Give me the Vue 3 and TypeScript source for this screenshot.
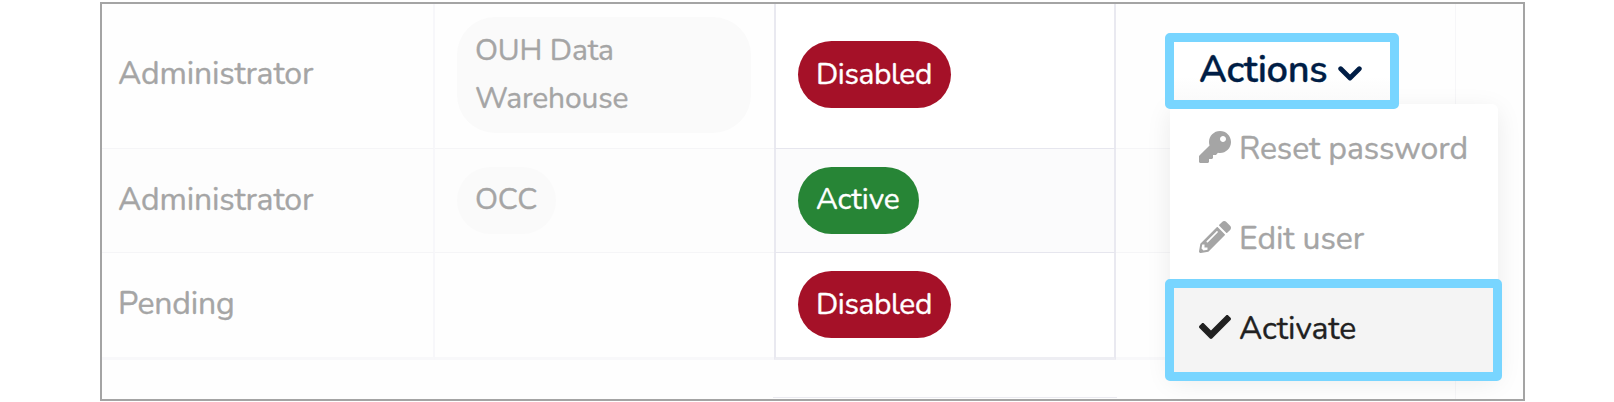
<script setup lang="ts">
interface UserRow {
  role: string
  organisation: string
  status: 'Disabled' | 'Active'
}

interface MenuItem {
  label: string
  icon: string
}

const rows: UserRow[] = [
  { role: 'Administrator', organisation: 'OUH Data Warehouse', status: 'Disabled' },
  { role: 'Administrator', organisation: 'OCC', status: 'Active' },
  { role: 'Pending', organisation: '', status: 'Disabled' },
]

const menu: MenuItem[] = [
  {
    label: 'Reset password',
    icon: 'M512 176.001C512 273.203 433.202 352 336 352c-11.22 0-22.19-1.062-32.827-3.069l-24.012 27.014A23.999 23.999 0 0 1 261.223 384H224v40c0 13.255-10.745 24-24 24h-40v40c0 13.255-10.745 24-24 24H24c-13.255 0-24-10.745-24-24v-78.059c0-6.365 2.529-12.47 7.029-16.971l161.802-161.802C163.108 213.814 160 195.271 160 176 160 78.798 238.797.001 335.999 0 433.488-.001 512 78.511 512 176.001zM336 128c0 26.51 21.49 48 48 48s48-21.49 48-48-21.49-48-48-48-48 21.49-48 48z',
  },
  {
    label: 'Edit user',
    icon: 'M497.9 142.1l-46.1 46.1c-4.7 4.7-12.3 4.7-17 0l-111-111c-4.7-4.7-4.7-12.3 0-17l46.1-46.1c18.7-18.7 49.1-18.7 67.9 0l60.1 60.1c18.8 18.7 18.8 49.1 0 67.9zM284.2 99.8L21.6 362.4.4 483.9c-2.9 16.4 11.4 30.6 27.8 27.8l121.5-21.3 262.6-262.6c4.7-4.7 4.7-12.3 0-17l-111-111c-4.8-4.7-12.4-4.7-17.1 0zM124.1 339.9c-5.5-5.5-5.5-14.3 0-19.8l154-154c5.5-5.5 14.3-5.5 19.8 0s5.5 14.3 0 19.8l-154 154c-5.5 5.5-14.3 5.5-19.8 0zM88 424h48v36.3l-64.5 11.3-31.1-31.1L51.7 376H88v48z',
  },
]

const checkIcon =
  'M173.898 439.404l-166.4-166.4c-9.997-9.997-9.997-26.206 0-36.204l36.203-36.204c9.997-9.998 26.207-9.998 36.204 0L192 312.69 432.095 72.596c9.997-9.997 26.207-9.997 36.204 0l36.203 36.204c9.997 9.997 9.997 26.206 0 36.204l-294.4 294.401c-9.998 9.997-26.207 9.997-36.204-.001z'
</script>

<template>
  <main class="page">
    <section class="frame">
      <div class="table">
        <div v-for="(row, i) in rows" :key="i" class="row" :class="{ striped: i === 1 }">
          <div class="cell role">{{ row.role }}</div>
          <div class="cell">
            <span v-if="row.organisation" class="pill tag">{{ row.organisation }}</span>
          </div>
          <div class="cell status">
            <span class="pill" :class="row.status.toLowerCase()">{{ row.status }}</span>
          </div>
          <div class="cell last"></div>
        </div>
        <div class="rest"><span></span></div>
      </div>
    </section>

    <div class="menu">
      <div v-for="item in menu" :key="item.label" class="item">
        <svg class="icon" viewBox="0 0 512 512"><path :d="item.icon" /></svg>
        <span class="label">{{ item.label }}</span>
      </div>
    </div>

    <button class="actions" type="button">
      <span>Actions</span>
      <svg class="chevron" viewBox="0 0 24 15"><path d="M2.7 2.7 12 12 21.3 2.7" /></svg>
    </button>

    <div class="item activate">
      <svg class="icon" viewBox="0 0 512 512"><path :d="checkIcon" /></svg>
      <span class="label">Activate</span>
    </div>
  </main>
</template>

<style>
body { margin: 0; background: #fff; }
</style>

<style scoped>
.page {
  position: relative;
  box-sizing: border-box;
  width: 1614px;
  height: 402px;
  padding: 2px 0 0 100px;
  overflow: hidden;
  font-family: Nunito, Lato, sans-serif;
  font-size: 32px;
  letter-spacing: -0.15px;
  color: #a5a5a5;
  -webkit-text-stroke: 0.35px currentColor;
}
.frame {
  box-sizing: border-box;
  width: 1425px;
  height: 399px;
  border: 2px solid #a4a4a4;
  background: #fefefe;
}
.table {
  display: grid;
  grid-template-rows: 145px 104px 107px 38px;
  box-sizing: border-box;
  width: 1354px;
  height: 395px;
  border-right: 1px solid #f6f6f8;
}
.row {
  display: grid;
  grid-template-columns: 333px 339px 342px 1fr;
}
.cell {
  display: flex;
  align-items: center;
  box-sizing: border-box;
  min-width: 0;
  padding: 0 22px 1px;
  border-right: 2px solid #f7f7fa;
  border-bottom: 1px solid #f5f5f7;
}
.row:first-child .cell { padding-bottom: 3px; }
.cell:nth-child(2) { border-right: 0; }
.row .cell.role { padding-left: 16px; padding-bottom: 3px; }
.row:first-child .cell.role { padding-bottom: 6px; }
.cell.last { border-right: 0; }
.cell.status {
  border-left: 2px solid #e9e9f0;
  border-right: 2px solid #e9e9f0;
  border-bottom-color: #e6e6ee;
  background: #fff;
}
.striped { background: #fdfdfd; }
.striped .status { background: #fbfbfc; }
.row:nth-child(3) .cell { border-bottom: 3px solid #f8f8fa; }
.row:nth-child(3) .status { border-bottom-color: #eeeef3; }
.rest { padding-left: 671px; display: flex; align-items: flex-end; }
.rest span { width: 344px; height: 1px; background: #eaeaf0; }

.pill {
  box-sizing: border-box;
  padding: 9px 18px 10px;
  border-radius: 34px;
  font-size: 30px;
  line-height: 48px;
  white-space: nowrap;
}
.tag {
  background: #fafafa;
  white-space: normal;
}
.row:first-child .tag { width: 294px; border-radius: 38px; }
.row:first-child .pill.tag { padding: 10px 18px 9px; line-height: 48.5px; }
.row:nth-child(2) .tag { width: 99px; white-space: nowrap; }
.disabled { padding: 10px 18px 9px; background: #a51128; color: #fff; width: 153px; letter-spacing: -0.4px; }
.active { background: #278536; color: #fff; width: 121px; }

.menu {
  position: absolute;
  left: 1170px;
  top: 104px;
  box-sizing: border-box;
  width: 328px;
  height: 272px;
  border-radius: 6px;
  background: #fff;
  box-shadow: 0 6px 26px rgba(0, 0, 0, 0.08);
}
.item {
  display: flex;
  align-items: center;
  gap: 8px;
  box-sizing: border-box;
  height: 90px;
  padding: 0 0 4px 29px;
  white-space: nowrap;
}
.label { padding-top: 2px; letter-spacing: -0.1px; }
.icon {
  width: 32px;
  height: 32px;
  fill: currentColor;
  flex: none;
}
.actions {
  position: absolute;
  left: 1165px;
  top: 33px;
  display: flex;
  align-items: center;
  box-sizing: border-box;
  width: 234px;
  height: 76px;
  padding: 0 0 3px 25px;
  border: 9px solid #78d5ff;
  border-radius: 5px;
  background: linear-gradient(#fff 60%, #fafafa);
  color: #001d45;
  font-family: inherit;
  font-size: 38px;
  font-weight: 600;
  line-height: 50px;
  letter-spacing: -0.35px;
}
.chevron {
  width: 24px;
  height: 15px;
  margin: 8px 0 0 11px;
  fill: none;
  stroke: currentColor;
  stroke-width: 4.8;
  stroke-linecap: round;
  stroke-linejoin: round;
}
.activate {
  position: absolute;
  left: 1165px;
  top: 279px;
  width: 337px;
  height: 102px;
  padding: 0 0 6px 25px;
  border: 9px solid #78d5ff;
  border-radius: 5px;
  background: #f4f4f4;
  color: #212121;
}
</style>
